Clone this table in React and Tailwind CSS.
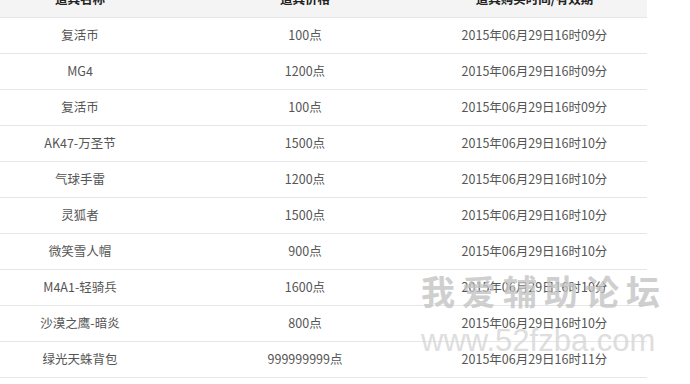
const rows = [
  ["复活币", "100点", "2015年06月29日16时09分"],
  ["MG4", "1200点", "2015年06月29日16时09分"],
  ["复活币", "100点", "2015年06月29日16时09分"],
  ["AK47-万圣节", "1500点", "2015年06月29日16时10分"],
  ["气球手雷", "1200点", "2015年06月29日16时10分"],
  ["灵狐者", "1500点", "2015年06月29日16时10分"],
  ["微笑雪人帽", "900点", "2015年06月29日16时10分"],
  ["M4A1-轻骑兵", "1600点", "2015年06月29日16时10分"],
  ["沙漠之鹰-暗炎", "800点", "2015年06月29日16时10分"],
  ["绿光天蛛背包", "999999999点", "2015年06月29日16时11分"],
];

export default function App() {
  return (
    <div
      className="relative w-[690px] h-[384px] overflow-hidden bg-white"
      style={{ fontFamily: '"Noto Sans CJK SC", "Noto Sans", sans-serif' }}
    >
      <div className="w-[647px] -mt-[18px] text-[12.5px] text-[#555]">
        <div className="flex h-[36px] items-center bg-[#f4f4f4] border-b border-[#e6e6e6] font-bold text-[#222]">
          <div className="w-[160px] text-center">道具名称</div>
          <div className="w-[290px] text-center">道具价格</div>
          <div className="flex-1 text-center pr-[28px]">道具购买时间/有效期</div>
        </div>
        {rows.map((r, i) => (
          <div key={i} className="flex h-[36px] items-center border-b border-[#e6e6e6]">
            <div className="w-[160px] text-center">{r[0]}</div>
            <div className="w-[290px] text-center">{r[1]}</div>
            <div className="flex-1 text-center pr-[28px]">{r[2]}</div>
          </div>
        ))}
      </div>

      {/* watermark */}
      <div className="absolute left-[421px] top-[274px] pointer-events-none select-none">
        <div className="text-[34px] font-bold leading-none tracking-[7px] text-[#c4c4c4] opacity-80">
          我爱辅助论坛
        </div>
        <div
          className="mt-[17px] text-[31px] leading-none text-[#d6d6d6] opacity-80"
          style={{ fontFamily: '"Liberation Sans", sans-serif' }}
        >
          www.52fzba.com
        </div>
      </div>
    </div>
  );
}
